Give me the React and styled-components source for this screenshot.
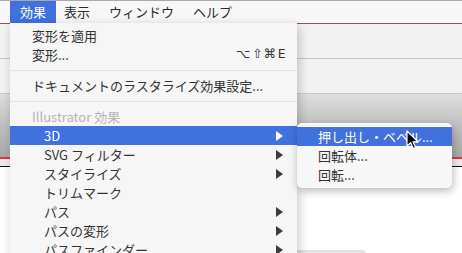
import styled, { createGlobalStyle } from 'styled-components';

const GlobalStyle = createGlobalStyle`
  html, body {
    margin: 0;
    padding: 0;
    background: #ffffff;
  }
  body {
    font-family: "Noto Sans CJK JP", "Liberation Sans", sans-serif;
    -webkit-font-smoothing: antialiased;
  }
`;

const font = `"Noto Sans CJK JP", "Noto Sans", sans-serif`;

const Screen = styled.div`
  position: relative;
  width: 462px;
  height: 253px;
  overflow: hidden;
  background: #ffffff;
`;

const MenuBar = styled.div`
  display: flex;
  align-items: stretch;
  height: 22px;
  padding-left: 10px;
  background: #f7f7f7;
  border-top: 1px solid #a9a9a9;
  font-family: ${font};
  font-size: 13px;
  color: #2a2a2a;
`;

const MenuTitle = styled.div`
  display: flex;
  align-items: center;
  padding: 0 ${p => (p.$active ? '10px' : '9px')};
  margin-right: ${p => (p.$active ? '-1px' : '1px')};
  background: ${p => (p.$active ? '#4171dc' : 'transparent')};
  color: ${p => (p.$active ? '#ffffff' : '#2a2a2a')};
  line-height: 1;
  padding-bottom: 1px;
`;

const AppWindow = styled.div`
  display: flex;
  flex-direction: column;
`;

const TitleLine = styled.div`
  height: 1px;
  background: #9a4e5c;
`;

const ToolStrip = styled.div`
  height: 34px;
  background: #f2f2f2;
  border-bottom: 1px solid #c9c9c9;
`;

const Workspace = styled.div`
  height: 63px;
  background: linear-gradient(#dedede, #bdbdbd 55%, #a9a9a9);
`;

const RedRule = styled.div`
  height: 2px;
  background: #e4364c;
`;

const Gutter = styled.div`
  height: 7px;
  background: #ececec;
  border-bottom: 1px solid #111;
`;

const Canvas = styled.div`
  flex: 1;
  height: 90px;
  background: #ffffff;
  padding-left: 297px;
  padding-top: 83px;
`;

const Tab = styled.div`
  width: 69px;
  height: 10px;
  background: #e2e2e2;
  border-top-right-radius: 4px;
`;

const DropMenu = styled.div`
  position: absolute;
  left: 10px;
  top: 23px;
  width: 287px;
  padding: 3px 0 4px;
  background: #f6f6f6;
  box-shadow: 2px 3px 10px rgba(0, 0, 0, 0.22);
  font-family: ${font};
  font-size: 13px;
  color: #333;
`;

const Item = styled.div`
  display: flex;
  align-items: center;
  height: 19px;
  padding-left: ${p => (p.$indent ? '34px' : '22px')};
  padding-right: 10px;
  background: ${p => (p.$active ? '#4171dc' : 'transparent')};
  color: ${p => (p.$active ? '#ffffff' : p.$disabled ? '#b5b5b5' : '#333')};
  line-height: 1;
  white-space: nowrap;
`;

const Label = styled.span`
  flex: 1;
`;

const Shortcut = styled.span`
  font-family: "DejaVu Sans", "Noto Sans CJK JP", sans-serif;
  font-size: 12.5px;
  letter-spacing: 1.4px;
  color: #333;
`;

const Separator = styled.div`
  height: 1px;
  margin: 6px 0 5px;
  background: #e2e2e2;
`;

const Arrow = styled.span`
  width: 0;
  height: 0;
  margin-right: 4px;
  border-top: 5px solid transparent;
  border-bottom: 5px solid transparent;
  border-left: 7px solid ${p => (p.$light ? '#ffffff' : '#3c3c3c')};
`;

const SubMenu = styled.div`
  position: absolute;
  left: 297px;
  top: 123px;
  width: 155px;
  padding: 4px 0;
  background: #f7f7f7;
  border-radius: 5px;
  box-shadow: 1px 3px 9px rgba(0, 0, 0, 0.28);
  font-family: ${font};
  font-size: 13px;
`;

const SubItem = styled.div`
  display: flex;
  align-items: center;
  height: 19px;
  padding-left: 21px;
  background: ${p => (p.$active ? '#4171dc' : 'transparent')};
  color: ${p => (p.$active ? '#ffffff' : '#333')};
  line-height: 1;
  white-space: nowrap;
`;

const Pointer = styled.svg`
  position: absolute;
  left: 406px;
  top: 130px;
`;

const submenuItems = [
  { label: 'SVG フィルター', sub: true },
  { label: 'スタイライズ', sub: true },
  { label: 'トリムマーク' },
  { label: 'パス', sub: true },
  { label: 'パスの変形', sub: true },
  { label: 'パスファインダー', sub: true },
];

export default function App() {
  return (
    <Screen>
      <GlobalStyle />
      <MenuBar>
        <MenuTitle $active>効果</MenuTitle>
        <MenuTitle>表示</MenuTitle>
        <MenuTitle>ウィンドウ</MenuTitle>
        <MenuTitle>ヘルプ</MenuTitle>
      </MenuBar>

      <AppWindow>
        <TitleLine />
        <ToolStrip />
        <ToolStrip />
        <Workspace />
        <RedRule />
        <Gutter />
        <Canvas>
          <Tab />
        </Canvas>
      </AppWindow>

      <DropMenu>
        <Item><Label>変形を適用</Label></Item>
        <Item>
          <Label>変形...</Label>
          <Shortcut>⌥⇧⌘E</Shortcut>
        </Item>
        <Separator />
        <Item><Label>ドキュメントのラスタライズ効果設定...</Label></Item>
        <Separator />
        <Item $disabled><Label>Illustrator 効果</Label></Item>
        <Item $indent $active>
          <Label>3D</Label>
          <Arrow $light />
        </Item>
        {submenuItems.map(it => (
          <Item $indent key={it.label}>
            <Label>{it.label}</Label>
            {it.sub && <Arrow />}
          </Item>
        ))}
      </DropMenu>

      <SubMenu>
        <SubItem $active>押し出し・ベベル...</SubItem>
        <SubItem>回転体...</SubItem>
        <SubItem>回転...</SubItem>
      </SubMenu>

      <Pointer width="14" height="21" viewBox="0 0 14 21">
        <path
          d="M1 1 L1 16 L4.6 12.6 L7.2 18.6 L9.6 17.6 L7 11.8 L12 11.8 Z"
          fill="#000"
          stroke="#fff"
          strokeWidth="1.2"
          strokeLinejoin="round"
        />
      </Pointer>
    </Screen>
  );
}
